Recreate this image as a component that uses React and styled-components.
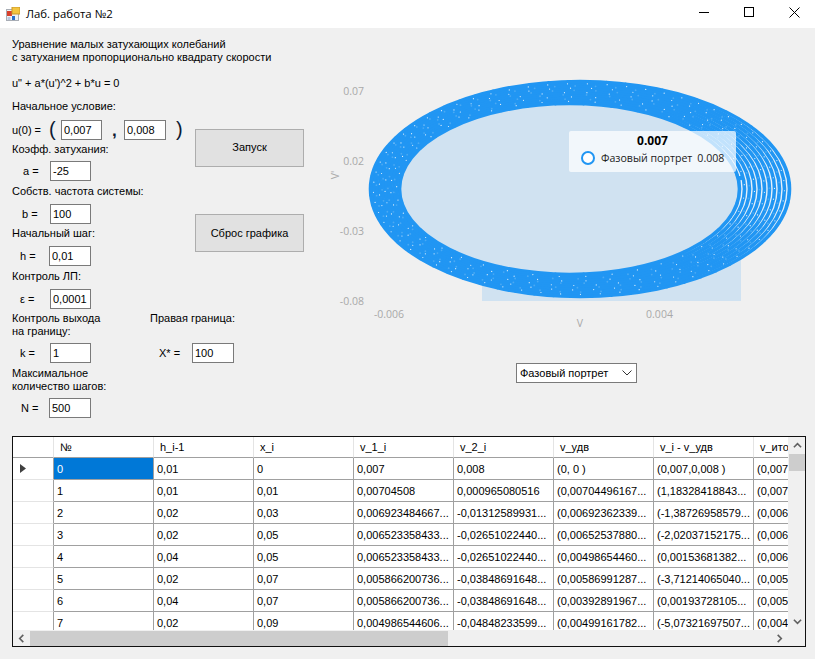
import React from 'react';
import styled, { createGlobalStyle } from 'styled-components';

const Global = createGlobalStyle`
  html, body { margin: 0; padding: 0; background: #f0f0f0; }
  * { box-sizing: border-box; }
`;
const Win = styled.div`
  width: 815px; height: 659px; overflow: hidden; background: #f0f0f0;
  font-family: "Liberation Sans", Arial, sans-serif; font-size: 11px; color: #000;
`;
const TitleBar = styled.header`
  height: 28px; background: #fff; display: flex; align-items: center; padding-left: 6px;
`;
const TitleText = styled.span`
  font-family: "Open Sans", sans-serif; font-size: 11.4px; margin-left: 6px; flex: 1; margin-top: -2px;
`;
const WinControls = styled.div`
  display: flex; height: 28px; padding-right: 15px; gap: 35px; align-items: flex-start; padding-top: 7px;
`;
const Top = styled.main`
  display: flex; height: 408px;
`;
const Left = styled.section`
  width: 330px; padding: 10px 0 0 12px; flex: none;
`;
const Text = styled.div`
  line-height: 13px; margin-top: ${p => p.$mt || 0}px; white-space: nowrap;
`;
const Middle = styled.div`
  display: flex; margin-top: 10px;
`;
const FormCol = styled.div`
  width: 183px; flex: none;
`;
const ButtonCol = styled.div`
  display: flex; flex-direction: column; gap: 47px; padding-top: 29px;
`;
const Button = styled.button`
  width: 109px; height: 38px; background: #e1e1e1; border: 1px solid #adadad; padding: 0 0 ${p => p.$pb || 0}px;
  font: 11px "Liberation Sans", Arial, sans-serif; color: #000;
`;
const Row = styled.div`
  display: flex; align-items: center; height: 20px; margin-top: ${p => p.$mt || 0}px;
`;
const FieldLabel = styled.span`
  width: ${p => p.$w}px; padding-left: ${p => p.$indent || 0}px; flex: none; white-space: nowrap;
`;
const Field = styled.input`
  width: ${p => p.$w || 41}px; height: 20px; border: 1px solid #7a7a7a; background: #fff;
  padding: 0 0 0 2px; font: 11px "Liberation Sans", Arial, sans-serif; color: #000; outline: none; flex: none;
`;
const Paren = styled.span`
  font-size: 20px; line-height: 20px; color: #0c1a33; width: ${p => p.$w}px; flex: none; margin-top: -2px;
  margin-left: ${p => p.$ml || 0}px;
`;
const Comma = styled.span`
  font-size: 17px; font-weight: bold; width: ${p => p.$w}px; margin-left: ${p => p.$ml}px; flex: none; margin-top: 2px; color: #0c1a33;
`;
const Bottom = styled.div`
  display: grid; grid-template-columns: 138px 1fr; margin-top: 3px;
`;
const Right = styled.section`
  flex: none; width: 470px; padding-top: 50px;
`;
const ChartWrap = styled.div`
  position: relative; width: 470px; height: 252px;
`;
const ChartSvg = styled.svg`
  display: block;
  text { font-family: "Open Sans", sans-serif; font-size: 10.5px; fill: #a9a9a9; }
`;
const Tip = styled.div`
  position: absolute; left: 239px; top: 53px; width: 167px; height: 41px; border-radius: 2px;
  background: rgba(255,255,255,.72); display: flex; flex-direction: column; align-items: center;
  font-family: "Open Sans", sans-serif; color: #1a1a1a; padding-top: 2px;
`;
const TipTitle = styled.div`
  font-size: 12px; font-weight: 700; line-height: 16px; color: #000;
`;
const TipRow = styled.div`
  display: flex; align-items: center; align-self: flex-start; margin: 1px 0 0 12px; font-size: 10.6px; line-height: 16px; white-space: nowrap;
`;
const TipDot = styled.span`
  width: 14px; height: 14px; border-radius: 50%; border: 2px solid #2196f3; background: #fff; margin-right: 6px; flex: none;
`;
const TipValue = styled.span`
  margin-left: 5px;
`;
const Combo = styled.div`
  width: 121px; height: 20px; margin: 33px 0 0 186px; border: 1px solid #7a7a7a; background: #fff;
  display: flex; align-items: center; justify-content: space-between; padding: 0 4px 0 3px; 
`;
const GridFrame = styled.section`
  margin-left: 12px; width: 794px; height: 211px; border: 1px solid #111; background: #f0f0f0;
  display: grid; grid-template-columns: 775px 17px; grid-template-rows: 193px 16px;
`;
const Viewport = styled.div`
  background: #fff; overflow: hidden;
`;
const GRow = styled.div`
  display: grid; grid-template-columns: 41px repeat(8, 100px); width: 841px;
  height: ${p => p.$h}px;
`;
const Corner = styled.div`
  border-right: 1px solid #e4e4e4; border-bottom: 1px solid #a0a0a0;
`;
const HeadCell = styled.div`
  border-right: 1px solid #e4e4e4; border-bottom: 1px solid #a0a0a0; padding: 4px 0 0 6px; line-height: 13px; white-space: nowrap;
`;
const RowHead = styled.div`
  border-right: 1px solid #a0a0a0; border-bottom: 1px solid #e4e4e4; display: flex; align-items: center; padding-left: 7px;
`;
const Cell = styled.div`
  border-right: 1px solid #a0a0a0; border-bottom: 1px solid #a0a0a0; padding: 5px 0 0 3px; line-height: 13px;
  white-space: nowrap; overflow: hidden;
  background: ${p => (p.$sel ? '#0078d7' : '#fff')}; color: ${p => (p.$sel ? '#fff' : '#000')};
`;
const VScroll = styled.div`
  display: flex; flex-direction: column; align-items: center; background: #f0f0f0; padding-left: 1px;
`;
const VArrow = styled.div`
  height: 17px; display: flex; align-items: center; justify-content: center; flex: none;
`;
const VThumb = styled.div`
  width: 16px; height: 17px; background: #cdcdcd; flex: none;
`;
const VTrack = styled.div`
  flex: 1;
`;
const HScroll = styled.div`
  display: flex; align-items: center; background: #f0f0f0;
`;
const HArrow = styled.div`
  width: 17px; height: 16px; display: flex; align-items: center; justify-content: center; flex: none;
`;
const HThumb = styled.div`
  width: 418px; height: 15px; background: #cdcdcd; flex: none;
`;
const HTrack = styled.div`
  flex: 1;
`;
const GridCorner = styled.div`
  background: #f0f0f0;
`;

const head = ['№', 'h_i-1', 'x_i', 'v_1_i', 'v_2_i', 'v_удв', 'v_i - v_удв', 'v_итог'];
const rows = [
  ['0', '0,01', '0', '0,007', '0,008', '(0, 0 )', '(0,007,0,008 )', '(0,007,0,008)'],
  ['1', '0,01', '0,01', '0,00704508', '0,000965080516', '(0,00704496167...', '(1,18328418843...', '(0,00704508'],
  ['2', '0,02', '0,03', '0,006923484667...', '-0,01312589931...', '(0,00692362339...', '(-1,38726958579...', '(0,00692348'],
  ['3', '0,02', '0,05', '0,006523358433...', '-0,02651022440...', '(0,00652537880...', '(-2,02037152175...', '(0,00652335'],
  ['4', '0,04', '0,05', '0,006523358433...', '-0,02651022440...', '(0,00498654460...', '(0,00153681382...', '(0,00652335'],
  ['5', '0,02', '0,07', '0,005866200736...', '-0,03848691648...', '(0,00586991287...', '(-3,71214065040...', '(0,00586620'],
  ['6', '0,04', '0,07', '0,005866200736...', '-0,03848691648...', '(0,00392891967...', '(0,00193728105...', '(0,00586620'],
  ['7', '0,02', '0,09', '0,004986544606...', '-0,04848233599...', '(0,00499161782...', '(-5,07321697507...', '(0,00498654'],
];

const Chev = ({ d, size = 9 }) => (
  <svg width={size} height={size} viewBox="0 0 10 10"><path d={d} fill="none" stroke="#606060" strokeWidth="1.8" /></svg>
);

const RINGS = 11;
function ring(k) {
  const f = k / (RINGS - 1);
  const l = 399.5 - 29 * f, r = 739.5 + 50 * f, t = 103.5 - 22 * f, b = 274.5 + 22 * f;
  return { cx: (l + r) / 2, cy: (t + b) / 2, rx: (r - l) / 2, ry: (b - t) / 2 };
}
const ringsData = Array.from({ length: RINGS }, (_, k) => ring(k));
const whiteDots = [];
const blueDots = [];
ringsData.forEach((e, k) => {
  const steps = 38 + k * 3;
  for (let i = 0; i < steps; i++) {
    const a = (i / steps) * Math.PI * 2 + k * 0.41;
    const p = { x: e.cx + e.rx * Math.cos(a), y: e.cy + e.ry * Math.sin(a) };
    if (k === 0 || k === RINGS - 1) blueDots.push(p);
    else if (k % 2 === 1) whiteDots.push(p);
    else blueDots.push({ ...p, soft: true });
  }
});

function Chart() {
  return (
    <ChartSvg width="470" height="252" viewBox="330 78 470 252">
      <rect x="482" y="189" width="259" height="112" fill="#d0e2f1" />
      <ellipse cx="580" cy="189" rx="209" ry="108" fill="#e6f1fa" />
      <ellipse cx="569.5" cy="189" rx="171.5" ry="87" fill="#d0e2f1" />
      {ringsData.map((e, k) => (
        <ellipse key={k} cx={e.cx} cy={e.cy} rx={e.rx} ry={e.ry} fill="none" stroke="#2196f3" strokeWidth="3.6" />
      ))}
      {blueDots.map((p, i) => (
        <circle key={i} cx={p.x} cy={p.y} r={p.soft ? 0.9 : 1.6} fill={p.soft ? '#4aa9f3' : '#2196f3'} />
      ))}
      {whiteDots.map((p, i) => (
        <circle key={i} cx={p.x} cy={p.y} r="0.6" fill="#e6f3fd" />
      ))}
      <circle cx="740.5" cy="178" r="2.2" fill="#2196f3" />
      <text x="364" y="95" textAnchor="end">0.07</text>
      <text x="364" y="165" textAnchor="end">0.02</text>
      <text x="364" y="235" textAnchor="end">-0.03</text>
      <text x="364" y="305" textAnchor="end">-0.08</text>
      <text x="389" y="318" textAnchor="middle">-0.006</text>
      <text x="659.5" y="318" textAnchor="middle">0.004</text>
      <text x="580" y="327" textAnchor="middle">V</text>
      <text x="0" y="0" textAnchor="middle" transform="translate(339 175) rotate(-90)">V'</text>
    </ChartSvg>
  );
}

export default function App() {
  return (
    <Win>
      <Global />
      <TitleBar>
        <svg width="14" height="14" viewBox="0 0 14 14">
          <rect x="0.5" y="2.5" width="12" height="11" fill="#eef1f5" stroke="#a8adb5" />
          <rect x="1" y="4" width="5" height="5" fill="#d8402c" />
          <rect x="6" y="0" width="8" height="7" fill="#f3c43f" stroke="#c9982a" strokeWidth="1" />
          <rect x="6" y="9" width="3" height="4" fill="#2a6fc9" />
          <rect x="1.5" y="10" width="3" height="3" fill="#b9c6dc" />
        </svg>
        <TitleText>Лаб. работа №2</TitleText>
        <WinControls>
          <svg width="10" height="10" viewBox="0 0 10 10"><path d="M0 5.5h10" stroke="#000" /></svg>
          <svg width="10" height="10" viewBox="0 0 10 10"><rect x=".5" y=".5" width="9" height="9" fill="none" stroke="#000" /></svg>
          <svg width="11" height="11" viewBox="0 0 11 11"><path d="M.5.5l10 10M10.5.5l-10 10" stroke="#000" /></svg>
        </WinControls>
      </TitleBar>
      <Top>
        <Left>
          <Text>Уравнение малых затухающих колебаний<br />с затуханием пропорционально квадрату скорости</Text>
          <Text $mt={13}>u" + a*(u')^2 + b*u = 0</Text>
          <Middle>
            <FormCol>
              <Text>Начальное условие:</Text>
              <Row $mt={7}>
                <FieldLabel $w={37}>u(0) =</FieldLabel>
                <Paren $w={12}>(</Paren>
                <Field readOnly value="0,007" />
                <Comma $ml={10} $w={12}>,</Comma>
                <Field readOnly value="0,008" $w={42} />
                <Paren $w={10} $ml={10}>)</Paren>
              </Row>
              <Text $mt={3}>Коэфф. затухания:</Text>
              <Row $mt={5}>
                <FieldLabel $w={38} $indent={11}>a =</FieldLabel>
                <Field readOnly value="-25" />
              </Row>
              <Text $mt={4}>Собств. частота системы:</Text>
              <Row $mt={6}>
                <FieldLabel $w={38} $indent={10}>b =</FieldLabel>
                <Field readOnly value="100" />
              </Row>
              <Text $mt={3}>Начальный шаг:</Text>
              <Row $mt={6}>
                <FieldLabel $w={37} $indent={8}>h =</FieldLabel>
                <Field readOnly value="0,01" $w={42} />
              </Row>
              <Text $mt={4}>Контроль ЛП:</Text>
              <Row $mt={6}>
                <FieldLabel $w={38} $indent={8}>ε =</FieldLabel>
                <Field readOnly value="0,0001" />
              </Row>
            </FormCol>
            <ButtonCol>
              <Button $pb={3}>Запуск</Button>
              <Button>Сброс графика</Button>
            </ButtonCol>
          </Middle>
          <Bottom>
            <div>
              <Text>Контроль выхода<br />на границу:</Text>
              <Row $mt={5}>
                <FieldLabel $w={38} $indent={8}>k =</FieldLabel>
                <Field readOnly value="1" />
              </Row>
              <Text $mt={4}>Максимальное<br />количество шагов:</Text>
              <Row $mt={5}>
                <FieldLabel $w={37} $indent={9}>N =</FieldLabel>
                <Field readOnly value="500" $w={42} />
              </Row>
            </div>
            <div>
              <Text>Правая граница:</Text>
              <Row $mt={18}>
                <FieldLabel $w={42} $indent={9}>X* =</FieldLabel>
                <Field readOnly value="100" $w={42} />
              </Row>
            </div>
          </Bottom>
        </Left>
        <Right>
          <ChartWrap>
            <Chart />
            <Tip>
              <TipTitle>0.007</TipTitle>
              <TipRow>
                <TipDot />
                Фазовый портрет
                <TipValue>0.008</TipValue>
              </TipRow>
            </Tip>
          </ChartWrap>
          <Combo>
            <span>Фазовый портрет</span>
            <svg width="10" height="6" viewBox="0 0 10 6"><path d="M.5.5L5 5l4.5-4.5" fill="none" stroke="#333" /></svg>
          </Combo>
        </Right>
      </Top>
      <GridFrame>
        <Viewport>
          <GRow $h={21}>
            <Corner />
            {head.map(h => <HeadCell key={h}>{h}</HeadCell>)}
          </GRow>
          {rows.map((r, i) => (
            <GRow key={i} $h={22}>
              <RowHead>
                {i === 0 && <svg width="6" height="9" viewBox="0 0 6 9"><path d="M0 0l6 4.5L0 9z" fill="#404040" /></svg>}
              </RowHead>
              {r.map((c, j) => <Cell key={j} $sel={i === 0 && j === 0}>{c}</Cell>)}
            </GRow>
          ))}
        </Viewport>
        <VScroll>
          <VArrow><Chev d="M1 7l4-4 4 4" /></VArrow>
          <VThumb />
          <VTrack />
          <VArrow><Chev d="M1 3l4 4 4-4" /></VArrow>
        </VScroll>
        <HScroll>
          <HArrow><Chev d="M7 1L3 5l4 4" /></HArrow>
          <HThumb />
          <HTrack />
          <HArrow><Chev d="M3 1l4 4-4 4" /></HArrow>
        </HScroll>
        <GridCorner />
      </GridFrame>
    </Win>
  );
}
